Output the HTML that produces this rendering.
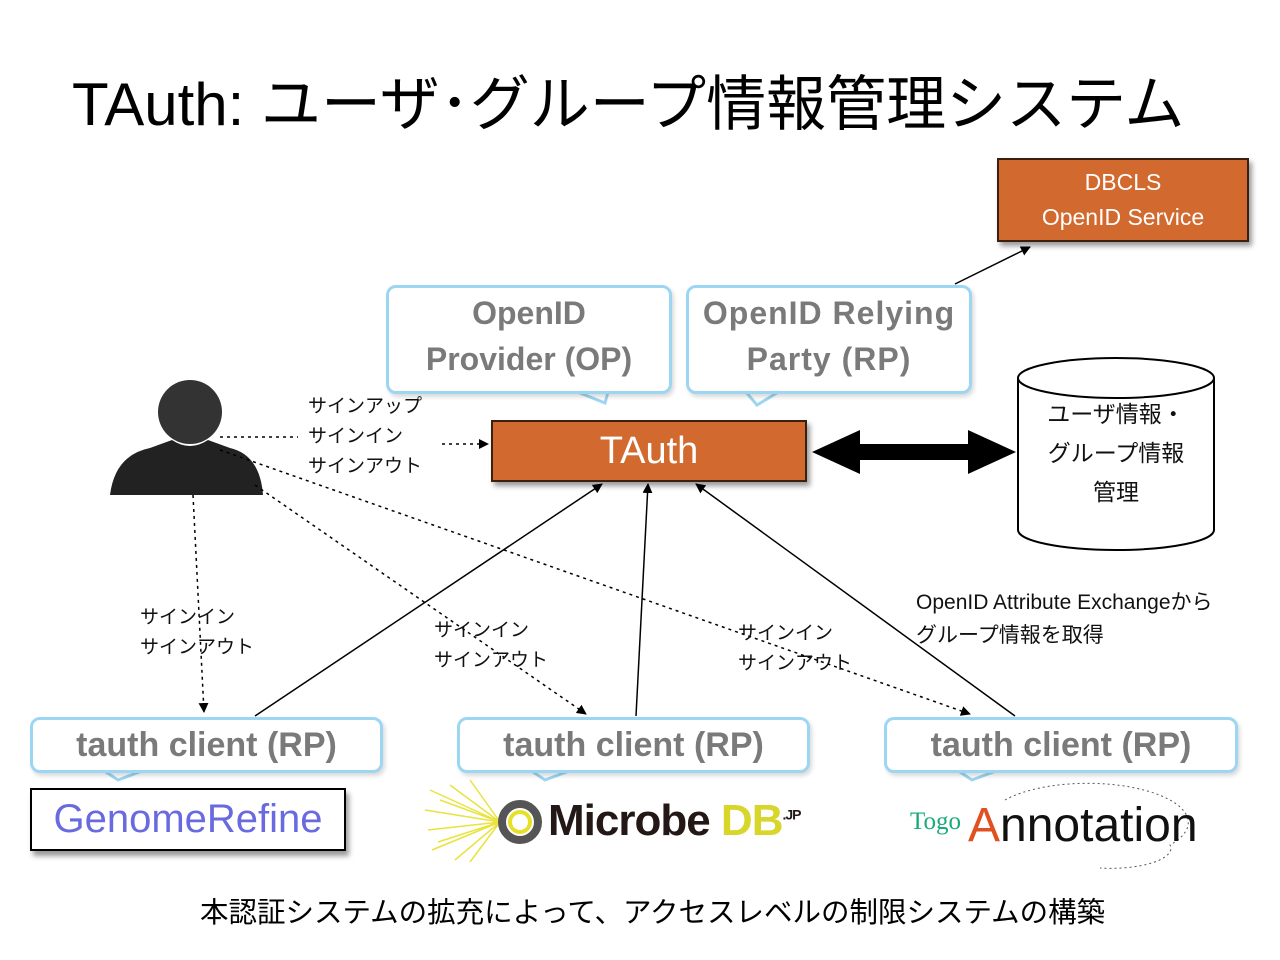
<!DOCTYPE html>
<html><head><meta charset="utf-8"><style>
body{margin:0;width:1280px;height:960px;background:#fff;position:relative;overflow:hidden;font-family:"Liberation Sans","Noto Sans CJK JP",sans-serif}
.a{position:absolute}
.co{position:absolute;border:3px solid #9dd6f2;border-radius:10px;background:#fff;color:#7a7a7a;text-align:center;box-shadow:2px 3px 4px rgba(0,0,0,.15)}
.or{position:absolute;background:#d2692e;border:2px solid #3a2010;color:#fff;text-align:center;box-shadow:3px 4px 5px rgba(0,0,0,.4)}
.sm{font-size:19px;line-height:30px;color:#111}
</style></head><body>
<div class="a" style="left:72px;top:68px;font-size:60px;line-height:74px;color:#000;white-space:nowrap">TAuth: ユーザ･グループ情報管理システム</div>

<div class="or" style="left:997px;top:158px;width:252px;height:84px;font-size:23px;line-height:35px;padding-top:5px;box-sizing:border-box">DBCLS<br>OpenID Service</div>

<svg class="a" style="left:0;top:0" width="1280" height="960">
<defs>
<marker id="m" markerWidth="10" markerHeight="10" refX="9" refY="5" orient="auto" markerUnits="userSpaceOnUse"><path d="M0,0L10,5L0,10z" fill="#000"/></marker>
</defs>
<path d="M560,385 L605,403 L610,385" fill="#fff" stroke="#9dd6f2" stroke-width="3"/>
<path d="M740,385 L757,405 L790,385" fill="#fff" stroke="#9dd6f2" stroke-width="3"/>
<path d="M100,768 L118,780 L150,768" fill="#fff" stroke="#9dd6f2" stroke-width="3"/>
<path d="M527,768 L545,780 L577,768" fill="#fff" stroke="#9dd6f2" stroke-width="3"/>
<path d="M954,768 L972,780 L1004,768" fill="#fff" stroke="#9dd6f2" stroke-width="3"/>
<circle cx="190" cy="412" r="32" fill="#333"/>
<path d="M110,495 Q115,455 150,448 L172,440 Q190,452 208,440 L230,448 Q260,455 263,495 Z" fill="#222"/>
<line x1="955" y1="284" x2="1030" y2="247" stroke="#000" stroke-width="1.5" marker-end="url(#m)"/>
<line x1="220" y1="437" x2="298" y2="437" stroke="#000" stroke-width="1.5" stroke-dasharray="3,4"/>
<line x1="442" y1="444" x2="488" y2="444" stroke="#000" stroke-width="1.5" stroke-dasharray="3,4" marker-end="url(#m)"/>
<line x1="193" y1="495" x2="204" y2="712" stroke="#000" stroke-width="1.5" stroke-dasharray="3,4" marker-end="url(#m)"/>
<line x1="255" y1="485" x2="586" y2="714" stroke="#000" stroke-width="1.5" stroke-dasharray="3,4" marker-end="url(#m)"/>
<line x1="220" y1="450" x2="970" y2="714" stroke="#000" stroke-width="1.5" stroke-dasharray="3,4" marker-end="url(#m)"/>
<line x1="255" y1="716" x2="602" y2="484" stroke="#000" stroke-width="1.5" marker-end="url(#m)"/>
<line x1="636" y1="716" x2="648" y2="484" stroke="#000" stroke-width="1.5" marker-end="url(#m)"/>
<line x1="1015" y1="716" x2="696" y2="484" stroke="#000" stroke-width="1.5" marker-end="url(#m)"/>
<path d="M812,452 L860,430 L860,444 L968,444 L968,430 L1016,452 L968,474 L968,460 L860,460 L860,474 Z" fill="#000"/>
<path d="M1018,378 L1018,530 A98,20 0 0 0 1214,530 L1214,378" fill="#fff" stroke="#000" stroke-width="2"/>
<ellipse cx="1116" cy="378" rx="98" ry="20" fill="#fff" stroke="#000" stroke-width="2"/>
<g stroke="#e6e02a" stroke-width="1.5" opacity=".9">
<path d="M500,822 L430,790 M500,822 L425,810 M500,822 L428,830 M500,822 L432,850 M500,822 L450,785 M500,822 L455,860 M500,822 L470,780 M500,822 L470,862 M500,822 L440,800 M500,822 L438,842"/>
</g>
<circle cx="520" cy="822" r="18" fill="none" stroke="#555" stroke-width="8"/>
<circle cx="520" cy="822" r="10" fill="none" stroke="#e6e02a" stroke-width="4"/>
<path d="M1005,800 A90,35 0 0 1 1170,845 A60,20 0 0 1 1100,868" fill="none" stroke="#555" stroke-dasharray="2,3"/>
</svg>

<div class="co" style="left:386px;top:285px;width:280px;height:101px;font-size:32px;line-height:46px;font-weight:bold;padding-top:2px">OpenID<br>Provider (OP)</div>
<div class="co" style="left:686px;top:285px;width:280px;height:101px;font-size:32px;line-height:46px;font-weight:bold;padding-top:2px;letter-spacing:1px">OpenID Relying<br>Party (RP)</div>

<div class="or" style="left:491px;top:420px;width:312px;height:58px;font-size:38px;line-height:58px">TAuth</div>

<div class="a sm" style="left:308px;top:392px">サインアップ<br>サインイン<br>サインアウト</div>
<div class="a" style="left:1018px;top:395px;width:196px;text-align:center;font-size:23px;line-height:39px;color:#111">ユーザ情報・<br>グループ情報<br>管理</div>
<div class="a sm" style="left:140px;top:603px">サインイン<br>サインアウト</div>
<div class="a sm" style="left:434px;top:616px">サインイン<br>サインアウト</div>
<div class="a sm" style="left:738px;top:619px">サインイン<br>サインアウト</div>
<div class="a" style="left:916px;top:586px;font-size:21px;line-height:33px;color:#111;white-space:nowrap">OpenID Attribute Exchangeから<br>グループ情報を取得</div>

<div class="co" style="left:30px;top:717px;width:347px;height:50px;font-size:34px;line-height:50px;font-weight:bold">tauth client (RP)</div>
<div class="co" style="left:457px;top:717px;width:347px;height:50px;font-size:34px;line-height:50px;font-weight:bold">tauth client (RP)</div>
<div class="co" style="left:884px;top:717px;width:348px;height:50px;font-size:34px;line-height:50px;font-weight:bold">tauth client (RP)</div>

<div class="a" style="left:30px;top:788px;width:312px;height:59px;border:2px solid #000;box-shadow:3px 5px 5px rgba(0,0,0,.4);color:#6a6ae0;font-size:40px;line-height:59px;text-align:center">GenomeRefine</div>
<div class="a" style="left:548px;top:796px;font-size:44px;font-weight:bold;color:#231815;letter-spacing:-1px;white-space:nowrap">Microbe<span style="color:#d8d62a"> DB</span><sup style="font-size:14px;color:#231815">.JP</sup></div>
<div class="a" style="left:910px;top:808px;font-size:25px;color:#1aaa7a;font-family:'Liberation Serif',serif">Togo</div>
<div class="a" style="left:968px;top:798px;font-size:48px;color:#111"><span style="color:#e05020">A</span>nnotation</div>

<div class="a" style="left:200px;top:894px;font-size:28.5px;line-height:38px;color:#000;white-space:nowrap">本認証システムの拡充によって、アクセスレベルの制限システムの構築</div>
</body></html>
